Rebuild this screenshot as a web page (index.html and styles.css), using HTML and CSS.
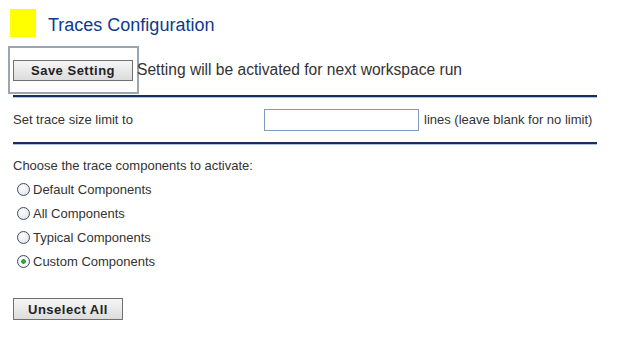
FILE: index.html
```html
<html>
  <head>
    <link rel="stylesheet" href="styles.css">
  </head>
  <body>
    <div class="title">
      <span class="logo"></span>
      <span class="title-text">Traces Configuration</span>
    </div>
    <div class="save-row">
      <div class="focus"><button class="btn save">Save Setting</button></div>
      <span class="save-note">Setting will be activated for next workspace run</span>
    </div>
    <hr class="rule">
    <div class="limit-row">
      <label class="limit-label">Set trace size limit to</label>
      <input type="text" class="limit-input">
      <span class="limit-note">lines (leave blank for no limit)</span>
    </div>
    <hr class="rule">
    <div class="choose">Choose the trace components to activate:</div>
    <div class="options">
      <label class="option"><input type="radio" name="comp"> Default Components</label>
      <label class="option"><input type="radio" name="comp"> All Components</label>
      <label class="option"><input type="radio" name="comp"> Typical Components</label>
      <label class="option"><input type="radio" name="comp" checked> Custom Components</label>
    </div>
    <button class="btn unselect">Unselect All</button>
  </body>
</html>
```

FILE: styles.css
```css
body { margin:0; font-family:"Liberation Sans", Arial, sans-serif; font-size:13px; color:#333; background:#fff; }
.title { display:flex; align-items:center; padding:9px 0 0 10px; height:28px; }
.logo { display:inline-block; width:26px; height:28px; background:#ffff00; }
.title-text { margin-left:12px; padding-top:4px; font-size:18px; color:#0d3a8c; }
.save-row { display:flex; align-items:center; margin-top:9px; padding-left:8px; }
.focus { width:124px; height:44px; border:2px solid #9aa6b2; display:flex; align-items:center; padding-left:3px; box-sizing:content-box; }
.btn { font-family:"Liberation Sans", Arial, sans-serif; font-weight:bold; font-size:13px; color:#222; border:1px solid #707070; background:linear-gradient(#f6f6f6, #dcdcdc); padding:0; letter-spacing:0.5px; }
.save { width:120px; height:21px; }
.save-note { font-size:15.6px; margin-left:-2px; color:#333; }
.rule { margin:1px 26px 0 13px; border:0; border-top:2px solid #1b2d5a; border-bottom:1px solid #a9c4e6; height:0; }
.limit-row { display:flex; align-items:center; height:43px; padding-left:13px; }
.limit-label { width:251px; }
.limit-input { width:155px; height:22px; border:1px solid #7e9cba; margin:0; padding:0; }
.limit-note { margin-left:5px; }
.choose { margin:13px 0 0 13px; }
.options { display:flex; flex-direction:column; margin:4px 0 0 16px; }
.option { display:flex; align-items:center; height:24px; }
.option input { appearance:none; -webkit-appearance:none; margin:0 3px 0 1px; width:13px; height:13px; border:1px solid #3d4d66; border-radius:50%; background:radial-gradient(circle at 40% 35%, #ffffff, #d8dde4); box-sizing:border-box; position:relative; }
.option input:checked { background:radial-gradient(circle, #2fbf2f 0, #1a9a1a 2px, #ffffff 2.5px, #dfe3e8 100%); }
.unselect { margin:25px 0 0 13px; width:110px; height:22px; }
```
